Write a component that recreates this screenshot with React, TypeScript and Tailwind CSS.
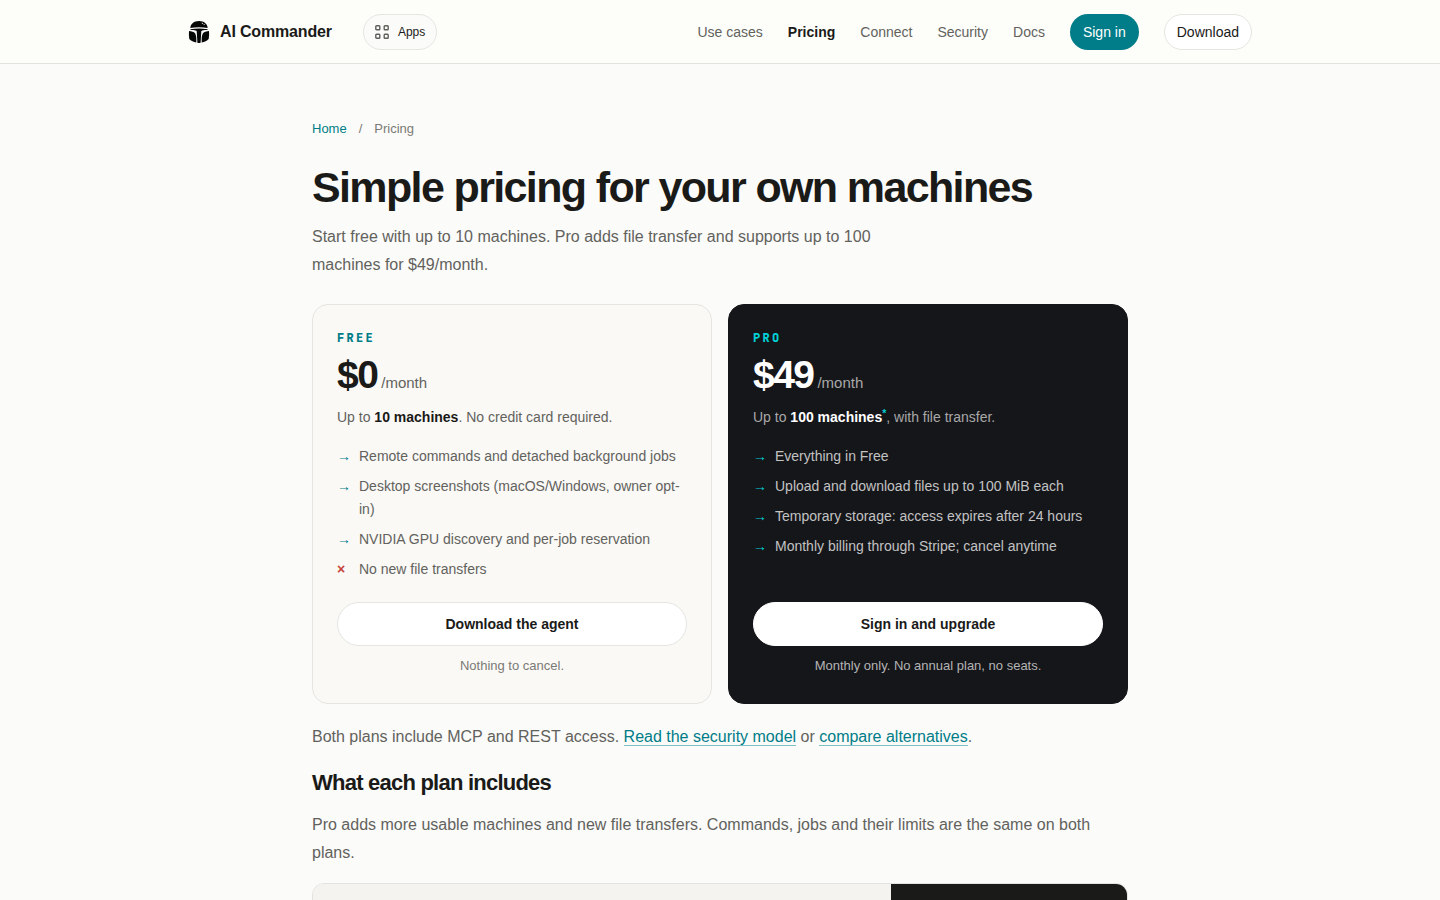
import type { ReactNode } from "react";

const NAV = [
  { label: "Use cases" },
  { label: "Pricing", active: true },
  { label: "Connect" },
  { label: "Security" },
  { label: "Docs" },
];

type Feature = { text: string; excluded?: boolean };

const FREE_FEATURES: Feature[] = [
  { text: "Remote commands and detached background jobs" },
  { text: "Desktop screenshots (macOS/Windows, owner opt-in)" },
  { text: "NVIDIA GPU discovery and per-job reservation" },
  { text: "No new file transfers", excluded: true },
];

const PRO_FEATURES: Feature[] = [
  { text: "Everything in Free" },
  { text: "Upload and download files up to 100 MiB each" },
  { text: "Temporary storage: access expires after 24 hours" },
  { text: "Monthly billing through Stripe; cancel anytime" },
];

function HelmetLogo() {
  return (
    <svg viewBox="0 0 22 24" className="h-6 w-[22px] shrink-0" fill="#050606" aria-hidden="true">
      {/* dome */}
      <path d="M2.300 7.900C2.700 3.800 5.900 1 11 1s8.300 2.800 8.700 6.900C17.100 7.500 14.100 7.300 11 7.300s-6.100.2-8.700.6Z" />
      {/* brow and nose guard */}
      <path d="M2.400 9.200C5.200 8.600 8 8.400 11 8.400s5.800.2 8.600.8v.9c-2.300-.1-4.700 0-6.300.8L12.600 22.700c-1 .3-2.200.3-3.200 0L8.700 10.900c-1.600-.8-4-.9-6.300-.8Z" />
      {/* cheeks */}
      <path d="M1 11.100c2 .1 4 .6 5.300 1.500 1.300 1.200 1.900 3.400 2 5.700v4.100c-2.800-.3-5.400-1.500-7-3.300C.8 16.500.8 13.700 1 11.100Z" />
      <path d="M21 11.100c-2 .1-4 .6-5.300 1.500-1.300 1.200-1.900 3.400-2 5.700v4.100c2.800-.3 5.400-1.500 7-3.300.5-2.600.5-5.400.3-8Z" />
      <path d="M13.800 3.100c1.300.3 2.300 1 2.900 2" fill="none" stroke="#fdfefa" strokeWidth=".9" strokeDasharray="1.300 .7" />
    </svg>
  );
}

function AppsIcon() {
  return (
    <svg viewBox="0 0 14 14" className="size-3.5" fill="none" stroke="#5f5f5a" strokeWidth="1.4" aria-hidden="true">
      <rect x=".8" y=".8" width="4" height="4" rx=".8" />
      <rect x="9.200" y=".8" width="4" height="4" rx=".8" />
      <rect x=".8" y="9.200" width="4" height="4" rx=".8" />
      <rect x="9.200" y="9.200" width="4" height="4" rx=".8" />
    </svg>
  );
}

function Header() {
  return (
    <header className="border-b border-[#e2e2de] bg-[#fdfefa]">
      <div className="mx-auto flex h-[63px] max-w-[1112px] items-center px-6">
        <a href="#" className="flex items-center gap-2.5 font-bold tracking-[-0.01em] text-[#1a1a18]">
          <HelmetLogo />
          AI Commander
        </a>
        <button
          type="button"
          className="ml-[31px] flex h-9 items-center gap-[9px] rounded-full border border-[#e5e5e1] bg-[#fbfbf9] px-[11px] text-xs text-[#1a1a18]"
        >
          <AppsIcon />
          Apps
        </button>
        <nav className="ml-auto flex items-center gap-[25px] text-sm">
          {NAV.map((n) => (
            <a key={n.label} href="#" className={n.active ? "font-bold text-[#1a1a18]" : "text-[#62625d]"}>
              {n.label}
            </a>
          ))}
          <a href="#" className="flex h-9 items-center rounded-full bg-[#007d88] px-[13px] text-white">
            Sign in
          </a>
          <a
            href="#"
            className="flex h-9 items-center rounded-full border border-[#e5e5e1] bg-white px-3 text-[#1a1a18]"
          >
            Download
          </a>
        </nav>
      </div>
    </header>
  );
}

type PlanProps = {
  name: string;
  price: string;
  summary: ReactNode;
  features: Feature[];
  action: string;
  note: string;
  dark?: boolean;
};

function PlanCard({ name, price, summary, features, action, note, dark }: PlanProps) {
  return (
    <section
      className={`flex flex-col rounded-2xl border p-6 ${
        dark ? "border-[#15161a] bg-[#15161a] text-[#a8a8a8]" : "border-[#e5e5e1] bg-[#faf9f6] text-[#62625d]"
      }`}
    >
      <h2
        className={`font-['JetBrains_Mono','Liberation_Mono',monospace] text-xs leading-[18px] font-extrabold tracking-[0.19em] uppercase ${
          dark ? "text-[#00cfd5]" : "text-[#007d88]"
        }`}
      >
        {name}
      </h2>
      <p className="mt-2 flex items-baseline gap-1">
        <span
          className={`text-[39px] leading-10 font-bold tracking-[-0.04em] ${dark ? "text-white" : "text-[#1a1a18]"}`}
        >
          {price}
        </span>
        <span className="text-[15px] leading-none">/month</span>
      </p>
      <p className="mt-2.5 text-sm leading-6">{summary}</p>
      <ul className={`mt-4 flex flex-col gap-[7px] text-sm leading-[23px] ${dark ? "text-[#c2c2c2]" : ""}`}>
        {features.map((f) => (
          <li key={f.text} className="flex">
            <span
              aria-hidden="true"
              className={`w-[22px] shrink-0 ${
                f.excluded ? "font-bold text-[#c8453c]" : dark ? "text-[#00cfd5]" : "text-[#007d88]"
              }`}
            >
              {f.excluded ? "×" : "→"}
            </span>
            <span>{f.text}</span>
          </li>
        ))}
      </ul>
      <div className="mt-auto pt-[21px]">
        <a
          href="#"
          className={`flex h-11 items-center justify-center rounded-full border bg-white text-sm font-bold text-[#1a1a18] ${
            dark ? "border-white" : "border-[#e5e5e1]"
          }`}
        >
          {action}
        </a>
        <p className={`mt-2.5 pb-[3px] text-center text-[13px] leading-5 ${dark ? "text-[#b4b4b4]" : "text-[#7a7a75]"}`}>
          {note}
        </p>
      </div>
    </section>
  );
}

function TextLink({ children }: { children: ReactNode }) {
  return (
    <a href="#" className="border-b border-[#7fc0c4] text-[#007d88]">
      {children}
    </a>
  );
}

export default function App() {
  return (
    <div className="min-h-screen bg-[#fbfbf9] font-['Liberation_Sans',Arial,sans-serif] text-base text-[#62625d]">
      <Header />
      <main className="mx-auto max-w-[864px] px-6 pt-[55px]">
        <nav aria-label="Breadcrumb" className="flex gap-3 text-[13px] leading-5 text-[#7a7a75]">
          <a href="#" className="text-[#007d88]">
            Home
          </a>
          <span>/</span>
          <span>Pricing</span>
        </nav>
        <h1 className="mt-[23px] text-[43px] leading-[50px] font-bold tracking-[-0.038em] text-[#1a1a18]">
          Simple pricing for your own machines
        </h1>
        <p className="mt-[11px] max-w-[600px] leading-7">
          Start free with up to 10 machines. Pro adds file transfer and supports up to 100 machines for $49/month.
        </p>

        <div className="mt-[25px] grid grid-cols-1 gap-4 md:grid-cols-2">
          <PlanCard
            name="Free"
            price="$0"
            summary={
              <>
                Up to <strong className="text-[#1a1a18]">10 machines</strong>. No credit card required.
              </>
            }
            features={FREE_FEATURES}
            action="Download the agent"
            note="Nothing to cancel."
          />
          <PlanCard
            dark
            name="Pro"
            price="$49"
            summary={
              <>
                Up to <strong className="text-white">100 machines</strong>
                <sup className="font-bold text-[#00cfd5]">*</sup>, with file transfer.
              </>
            }
            features={PRO_FEATURES}
            action="Sign in and upgrade"
            note="Monthly only. No annual plan, no seats."
          />
        </div>

        <p className="mt-[19px] leading-7">
          Both plans include MCP and REST access. <TextLink>Read the security model</TextLink> or{" "}
          <TextLink>compare alternatives</TextLink>.
        </p>
        <h2 className="mt-4 text-[22px] leading-8 font-bold tracking-[-0.035em] text-[#1a1a18]">
          What each plan includes
        </h2>
        <p className="mt-3 leading-7">
          Pro adds more usable machines and new file transfers. Commands, jobs and their limits are the same on both
          plans.
        </p>

        <div className="mt-4 overflow-hidden rounded-xl border border-[#e2e2de]">
          <table className="w-full table-fixed">
            <thead>
              <tr className="h-12">
                <th className="w-[42%] bg-[#f4f3ef]" />
                <th className="w-[29%] bg-[#f4f3ef]" />
                <th className="w-[29%] bg-[#1a1a18]" />
              </tr>
            </thead>
          </table>
        </div>
      </main>
    </div>
  );
}
